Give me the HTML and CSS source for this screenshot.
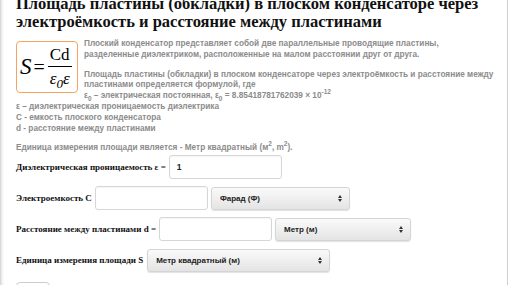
FILE: index.html
```html
<!DOCTYPE html>
<html lang="ru">
<head>
  <meta charset="UTF-8" />
  <meta name="viewport" content="width=device-width, initial-scale=1.0"/>
  <title>Площадь пластины конденсатора</title>
  <link rel="stylesheet" href="styles.css">
</head>
<body>
  <div class="page">
    <h1 class="title">Площадь пластины (обкладки) в плоском конденсаторе через электроёмкость и расстояние между пластинами</h1>

    <div class="info">
      <div class="formula">
        <span class="f-s">S</span>
        <span class="f-eq">=</span>
        <span class="frac">
          <span class="num">Cd</span>
          <span class="den">ε<sub>0</sub>ε</span>
        </span>
      </div>
      <p class="lead">Плоский конденсатор представляет собой две параллельные проводящие пластины, разделенные диэлектриком, расположенные на малом расстоянии друг от друга.</p>
      <p>Площадь пластины (обкладки) в плоском конденсаторе через электроёмкость и расстояние между пластинами определяется формулой, где<br>
      ε<sub>0</sub> – электрическая постоянная, ε<sub>0</sub> = 8.85418781762039 × 10<sup>-12</sup><br>
      ε – диэлектрическая проницаемость диэлектрика<br>
      C - емкость плоского конденсатора<br>
      d - расстояние между пластинами</p>
      <p class="unit">Единица измерения площади является - Метр квадратный (м<sup>2</sup>, m<sup>2</sup>).</p>
    </div>

    <form class="calc">
      <div class="row">
        <label for="eps">Диэлектрическая проницаемость ε =</label>
        <input id="eps" class="field" type="text" value="1">
      </div>
      <div class="row">
        <label for="cap">Электроемкость C</label>
        <input id="cap" class="field" type="text">
        <span class="select-wrap w-cap">
          <select class="unit-select">
            <option>Фарад (Ф)</option>
          </select>
        </span>
      </div>
      <div class="row">
        <label for="dist">Расстояние между пластинами d =</label>
        <input id="dist" class="field" type="text">
        <span class="select-wrap w-dist">
          <select class="unit-select">
            <option>Метр (м)</option>
          </select>
        </span>
      </div>
      <div class="row">
        <label>Единица измерения площади S</label>
        <span class="select-wrap w-area">
          <select class="unit-select">
            <option>Метр квадратный (м)</option>
          </select>
        </span>
      </div>
      <button type="button" class="go">Найти</button>
    </form>
  </div>
</body>
</html>
```

FILE: styles.css
```css
* {
  box-sizing: border-box;
}

body {
  margin: 0;
  background: #fff;
  font-family: 'Liberation Serif', 'Times New Roman', serif;
  overflow: hidden;
}

.page {
  width: 508px;
  height: 290px;
  padding: 0 6px 0 15px;
  border-left: 1px solid #d8d8d8;
  border-right: 1px solid #cfcfcf;
  box-shadow: inset 3px 0 3px -2px rgba(0, 0, 0, 0.12);
}

.title {
  margin: -5px 0 0;
  font-size: 16.5px;
  line-height: 18px;
  font-weight: bold;
  color: #111;
}

.info {
  margin-top: 8px;
  font-family: 'Liberation Sans', Arial, sans-serif;
  font-size: 8.25px;
  font-weight: bold;
  line-height: 10.8px;
  color: #8c8c8c;
}

.info p {
  margin: 0 0 9px;
}

.info .lead {
  max-width: 445px;
}

.info sub,
.info sup {
  font-size: 6.5px;
  line-height: 0;
}

.formula {
  float: left;
  display: flex;
  align-items: center;
  width: 62px;
  height: 52px;
  margin: 2px 6px 6px 0;
  padding-left: 3px;
  border: 1px solid #f5a45f;
  border-radius: 4px;
  font-family: 'Liberation Serif', 'Times New Roman', serif;
  color: #000;
  font-weight: normal;
}

.f-s {
  font-size: 23px;
  font-style: italic;
}

.f-eq {
  font-size: 20px;
  margin: 0 3px 0 2px;
}

.frac {
  display: flex;
  flex-direction: column;
  align-items: center;
  font-size: 17px;
  line-height: 18px;
}

.num {
  padding: 0 2px 2px;
  border-bottom: 1px solid #000;
}

.den {
  padding-top: 3px;
  font-style: italic;
}

.den sub {
  font-size: 13px;
  line-height: 0;
}

.unit {
  margin-top: 11px;
}

.calc {
  margin-top: -8px;
}

.row {
  display: flex;
  align-items: center;
  gap: 3px;
  height: 24px;
  margin-bottom: 7px;
}

.row label {
  font-size: 9px;
  font-weight: bold;
  color: #111;
}

.field {
  flex: none;
  width: 113px;
  height: 24px;
  padding: 0 7px;
  border: 1px solid #d6d6d6;
  border-radius: 3px;
  font-family: 'Liberation Sans', Arial, sans-serif;
  font-size: 8.5px;
  font-weight: bold;
  color: #222;
  box-shadow: inset 0 1px 1px rgba(0, 0, 0, 0.04);
}

.select-wrap {
  position: relative;
  display: block;
  flex: none;
  height: 23px;
}

.select-wrap::before,
.select-wrap::after {
  content: '';
  position: absolute;
  right: 8px;
  border-left: 2px solid transparent;
  border-right: 2px solid transparent;
  pointer-events: none;
}

.select-wrap::before {
  top: 8px;
  border-bottom: 3px solid #333;
}

.select-wrap::after {
  top: 12px;
  border-top: 3px solid #333;
}

.unit-select {
  appearance: none;
  width: 100%;
  height: 23px;
  padding: 0 8px;
  border: 1px solid #d4d4d4;
  border-radius: 3px;
  background: linear-gradient(#fafafa, #e4e4e4);
  font-family: 'Liberation Sans', Arial, sans-serif;
  font-size: 8px;
  font-weight: bold;
  color: #222;
  box-shadow: 0 1px 1px rgba(0, 0, 0, 0.12);
}

.w-cap {
  width: 139px;
}

.w-dist {
  width: 136px;
}

.w-area {
  width: 183px;
  margin-left: 1px;
}

.go {
  height: 22px;
  width: 34px;
  margin-top: 3px;
  border: 1px solid #ccc;
  border-radius: 4px;
  background: #fff;
  font-size: 9px;
}
```
